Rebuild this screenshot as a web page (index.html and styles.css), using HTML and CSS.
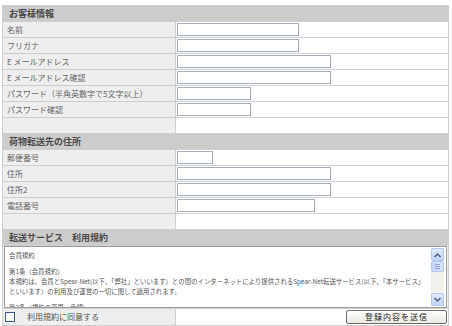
FILE: index.html
```html
<!DOCTYPE html>
<html>
<head>
<meta charset="utf-8">
<title>会員登録</title>
<link rel="stylesheet" href="styles.css">
</head>
<body>
<form class="regForm" action="#">
<table class="regTable">
	<colgroup><col class="colLbl"><col class="colFld"></colgroup>
	<tr><th colspan="2" class="secHead">お客様情報</th></tr>
	<tr><td class="lbl">名前</td><td class="fld"><input type="text" class="txt w122"></td></tr>
	<tr><td class="lbl">フリガナ</td><td class="fld"><input type="text" class="txt w122"></td></tr>
	<tr><td class="lbl">E メールアドレス</td><td class="fld"><input type="text" class="txt w154"></td></tr>
	<tr><td class="lbl">E メールアドレス確認</td><td class="fld"><input type="text" class="txt w154"></td></tr>
	<tr><td class="lbl">パスワード（半角英数字で5文字以上）</td><td class="fld"><input type="password" class="txt w74"></td></tr>
	<tr><td class="lbl">パスワード確認</td><td class="fld"><input type="password" class="txt w74"></td></tr>
	<tr><td class="lbl">&nbsp;</td><td class="fld">&nbsp;</td></tr>

	<tr><th colspan="2" class="secHead">荷物転送先の住所</th></tr>
	<tr><td class="lbl">郵便番号</td><td class="fld"><input type="text" class="txt w36"></td></tr>
	<tr><td class="lbl">住所</td><td class="fld"><input type="text" class="txt w154"></td></tr>
	<tr><td class="lbl">住所2</td><td class="fld"><input type="text" class="txt w154"></td></tr>
	<tr><td class="lbl">電話番号</td><td class="fld"><input type="text" class="txt w138"></td></tr>
	<tr><td class="lbl">&nbsp;</td><td class="fld">&nbsp;</td></tr>

	<tr><th colspan="2" class="secHead">転送サービス　利用規約</th></tr>
	<tr>
		<td colspan="2" class="termsCell">
			<div class="termsBox">
				<div class="termsText">
					<p>会員規約</p>
					<p>第1条（会員規約）<br>
					本規約は、会員とSpear-Net(以下、「弊社」といいます）との間のインターネットにより提供されるSpear-Net転送サービス(以下、「本サービス」<br>
					といいます）の利用及び運営の一切に関して適用されます。</p>
					<p>第2条（規約の変更、承認）</p>
				</div>
				<div class="scrollBar">
					<div class="sbBtn"><svg width="9" height="6" viewBox="0 0 9 6"><path d="M1.5 5 L4.5 2 L7.5 5" fill="none" stroke="#4d6185" stroke-width="1.5"/></svg></div>
					<div class="sbThumb"><span></span><span></span><span></span></div>
					<div class="sbTrack"></div>
					<div class="sbBtn"><svg width="9" height="6" viewBox="0 0 9 6"><path d="M1.5 1 L4.5 4 L7.5 1" fill="none" stroke="#4d6185" stroke-width="1.5"/></svg></div>
				</div>
			</div>
		</td>
	</tr>
	<tr>
		<td class="lbl agreeCell"><label class="agree"><input type="checkbox" class="chk">利用規約に同意する</label></td>
		<td class="fld btnCell"><button type="button" class="sendBtn">登録内容を送信</button></td>
	</tr>
</table>
</form>
</body>
</html>
```

FILE: styles.css
```css
body {
	margin: 0;
	padding: 5px 3px 0 2px;
	background-color: #fff;
	font-family: "Noto Sans CJK JP", "Liberation Sans", sans-serif;
}
.regTable {
	width: 447px;
	table-layout: fixed;
	border-collapse: collapse;
	border: 1px solid #c4c4c4;
}
.colLbl { width: 173px; }
.regTable td, .regTable th {
	height: 15px;
	padding: 0;
	border: 1px solid #cfcfcf;
	vertical-align: middle;
	line-height: 12px;
}
.secHead {
	background-color: #cccccc;
	border-top: 1px solid #a9a9a9;
	color: #4a4a4a;
	font-size: 9px;
	font-weight: bold;
	text-align: left;
	padding-left: 6px !important;
}
.lbl {
	background-color: #eeeeee;
	color: #666;
	font-size: 8px;
	padding-left: 4px !important;
	white-space: nowrap;
}
.fld {
	background-color: #fff;
	padding-left: 1px !important;
	font-size: 8px;
}
.txt {
	display: block;
	box-sizing: border-box;
	height: 13px;
	margin: 0;
	padding: 0 2px;
	border: 1px solid #a7afbd;
	background: #fff;
	font-size: 8px;
}
.w122 { width: 122px; }
.w154 { width: 154px; }
.w74  { width: 74px; }
.w36  { width: 36px; }
.w138 { width: 138px; }

.termsCell {
	height: auto !important;
	padding: 0 1px 0 1px !important;
	background-color: #eeeeee;
}
.termsBox {
	display: flex;
	height: 62px;
	box-sizing: border-box;
	border: 1px solid #9c9c9c;
	background: #fff;
	overflow: hidden;
}
.termsText {
	flex: 1;
	min-width: 0;
	padding: 4px 4px 0 4px;
	font-size: 6.4px;
	line-height: 10px;
	color: #555;
	white-space: nowrap;
	overflow: hidden;
}
.termsText p {
	margin: 0 0 6px 0;
}
.scrollBar {
	width: 13px;
	flex: none;
	display: flex;
	flex-direction: column;
	background: #f3f1ec;
	margin: 1px 2px 1px 0;
}
.sbBtn {
	height: 13px;
	display: flex;
	align-items: center;
	justify-content: center;
	background: linear-gradient(#e4ecfb, #c1d3fb);
	border: 1px solid #b6c8ef;
	border-radius: 2px;
	box-sizing: border-box;
}
.sbThumb {
	height: 11px;
	box-sizing: border-box;
	border: 1px solid #b6c8ef;
	border-radius: 2px;
	background: linear-gradient(90deg, #c7d6fb, #dbe5fd);
	display: flex;
	flex-direction: column;
	align-items: center;
	justify-content: center;
	gap: 1px;
}
.sbThumb span {
	width: 5px;
	height: 1px;
	background: #8ea5d9;
}
.sbTrack { flex: 1; }

.agreeCell {
	height: 16px !important;
	padding-left: 2px !important;
}
.agree {
	display: flex;
	align-items: center;
	gap: 12px;
	color: #555;
	font-size: 8px;
}
.chk {
	appearance: none;
	margin: 0;
	width: 10px;
	height: 10px;
	border: 1px solid #3d5a8c;
	background: #fff;
}
.btnCell {
	text-align: right;
	padding-right: 1px !important;
}
.sendBtn {
	width: 101px;
	height: 14px;
	padding: 0;
	border: 1px solid #6f6f6f;
	border-radius: 2px;
	background: linear-gradient(#ffffff, #ece9e2);
	font-family: "Noto Sans CJK JP", sans-serif;
	font-size: 8px;
	line-height: 12px;
	color: #222;
	letter-spacing: 1px;
	vertical-align: middle;
}
```
